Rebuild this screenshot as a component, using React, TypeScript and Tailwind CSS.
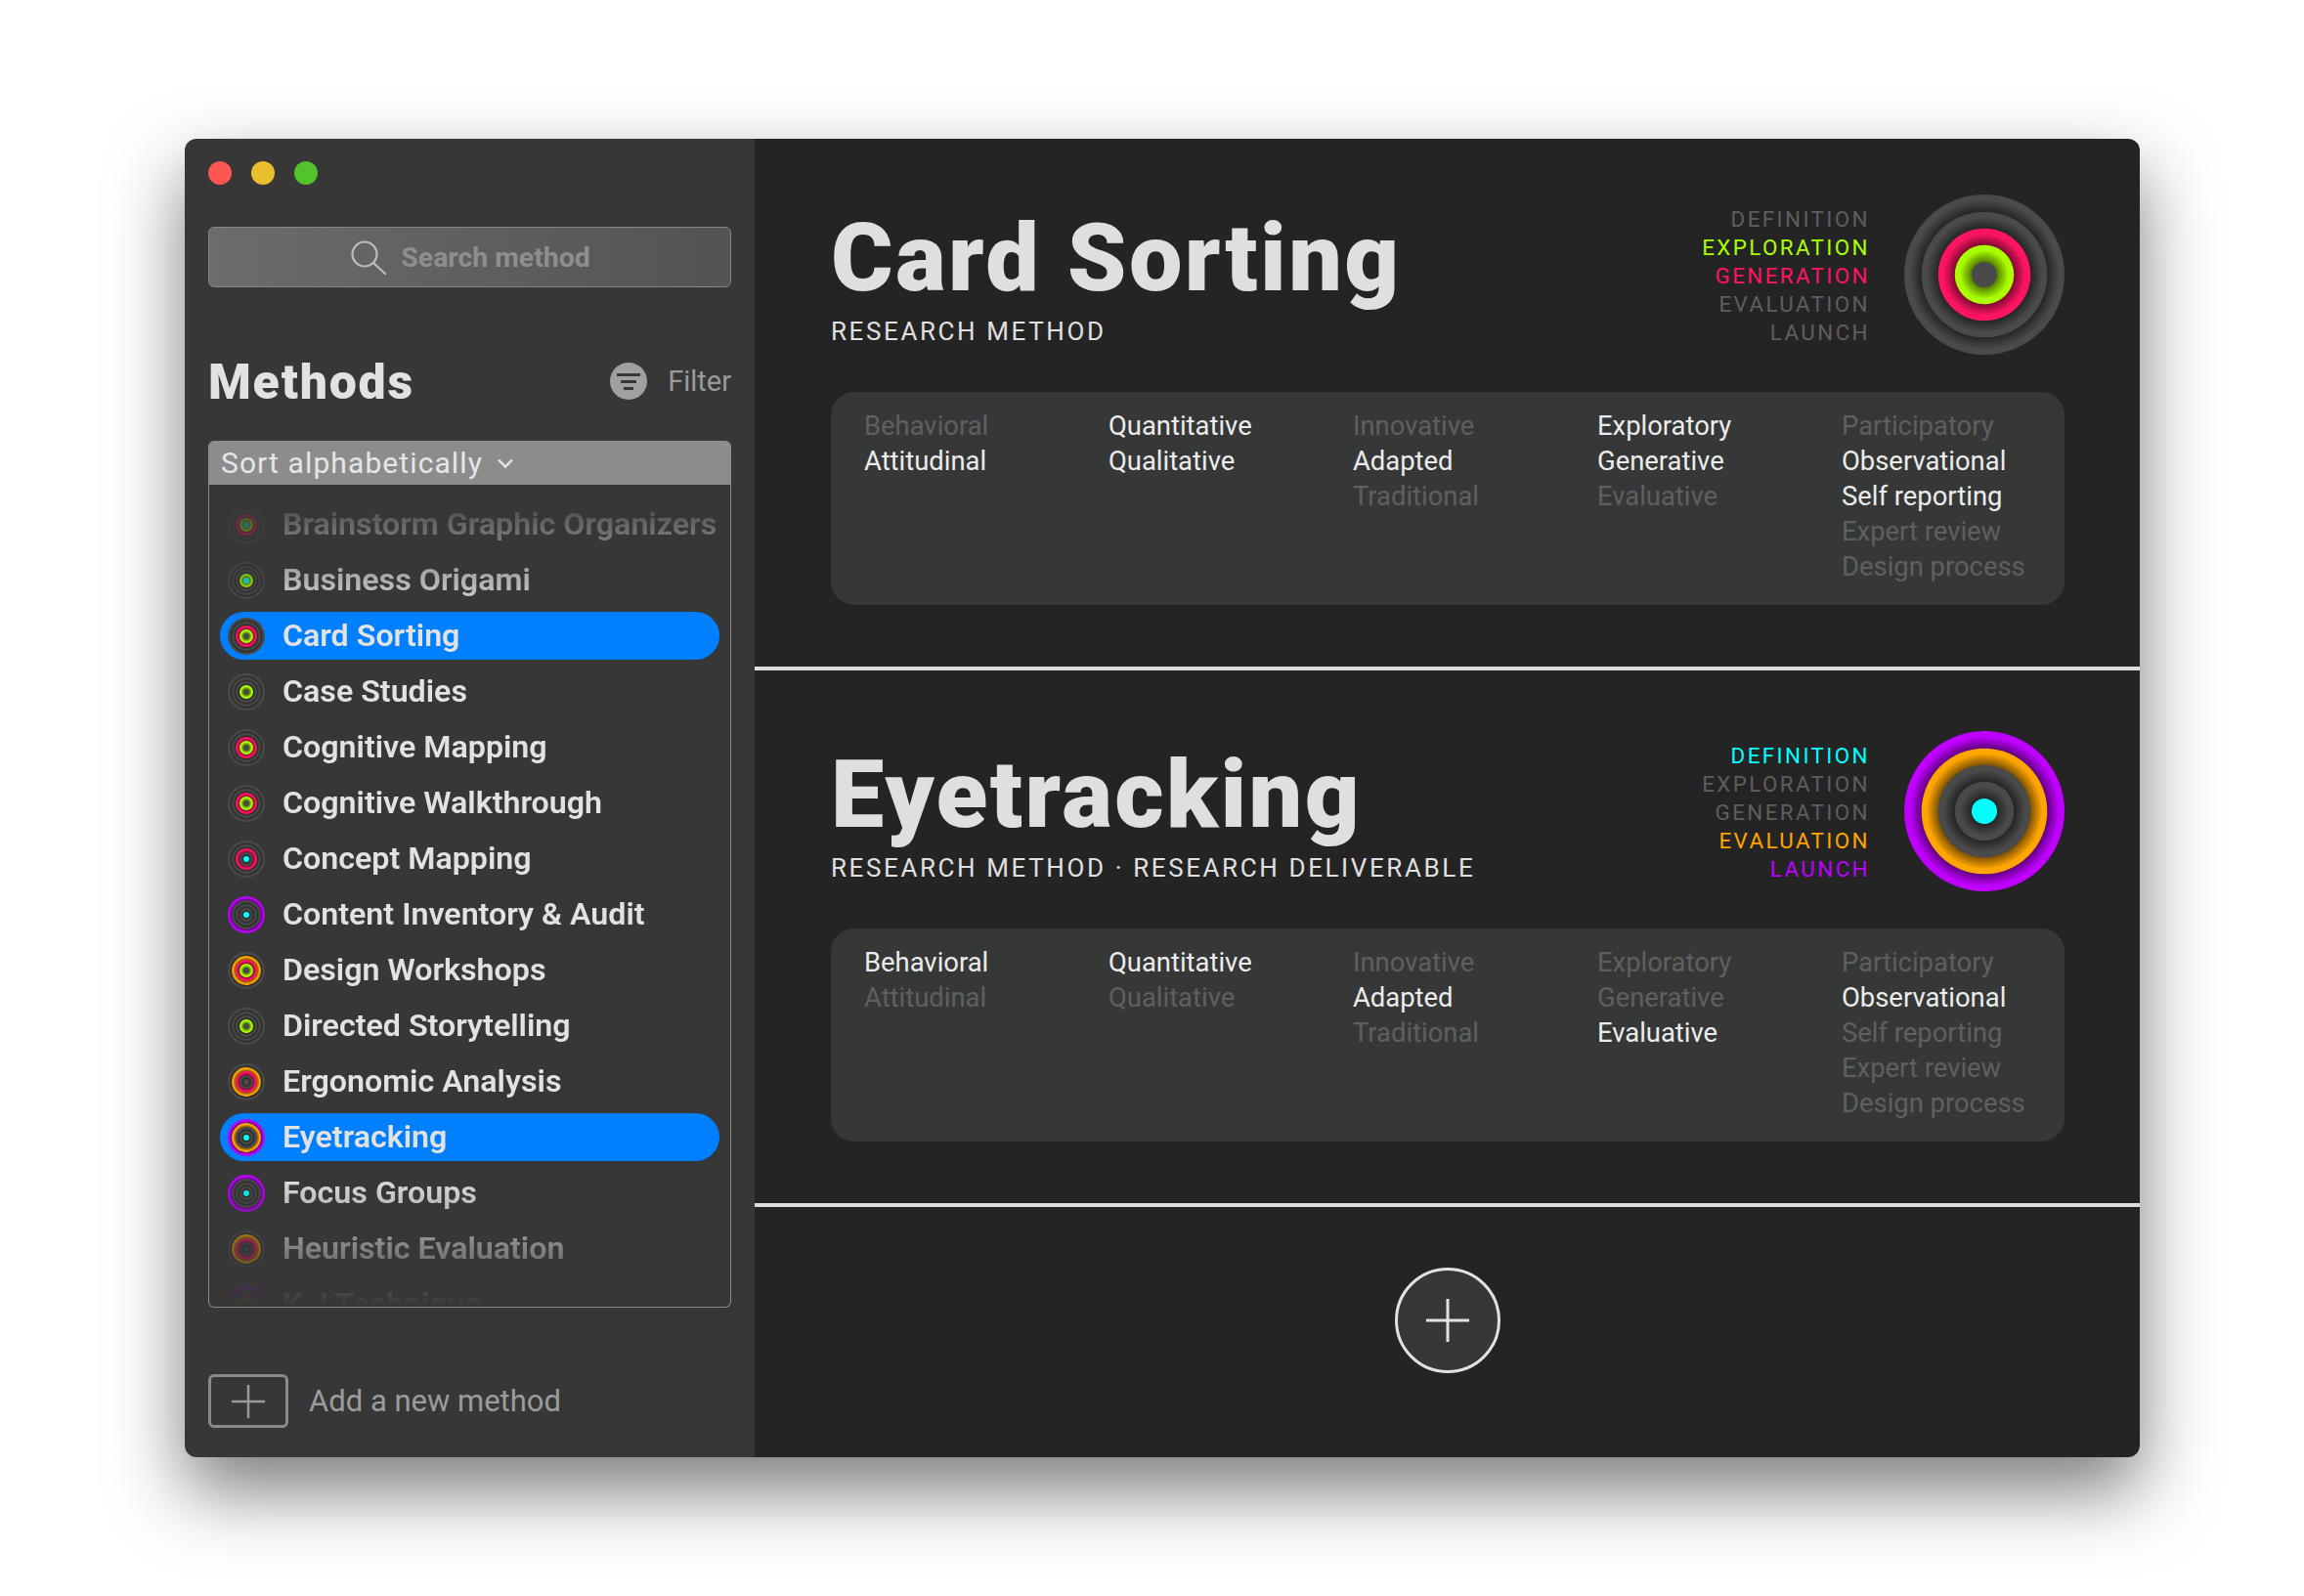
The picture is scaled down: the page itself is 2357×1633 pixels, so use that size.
import React, { useId } from "react";

const CYAN = "#00ffff";
const LIME = "#aaff00";
const PINK = "#ff1463";
const AMBER = "#ffa500";
const VIOLET = "#bf00ff";
const OFF = "#4a4a4a";

// phases, outermost ring first
const PHASES = [
  { key: "launch", label: "LAUNCH", color: VIOLET, r: 82 },
  { key: "evaluation", label: "EVALUATION", color: AMBER, r: 64.3 },
  { key: "generation", label: "GENERATION", color: PINK, r: 47.3 },
  { key: "exploration", label: "EXPLORATION", color: LIME, r: 30.3 },
  { key: "definition", label: "DEFINITION", color: CYAN, r: 13 },
];

function Rings({ on, size }: { on: string[]; size: number }) {
  const id = useId();
  return (
    <svg width={size} height={size} viewBox="0 0 164 164" className="shrink-0">
      <defs>
        {PHASES.slice(0, 4).map((p, i) => {
          const inner = PHASES[i + 1].r;
          const start = (inner / p.r) * 100;
          const end = ((inner + (p.r - inner) * 0.7) / p.r) * 100;
          return (
            <radialGradient key={p.key} id={`${id}-${p.key}`}>
              <stop offset={`${start}%`} stopColor="#000" stopOpacity={0.5} />
              <stop offset={`${end}%`} stopColor="#000" stopOpacity={0} />
            </radialGradient>
          );
        })}
      </defs>
      {PHASES.map((p, i) => (
        <React.Fragment key={p.key}>
          <circle cx="82" cy="82" r={p.r} fill={on.includes(p.key) ? p.color : OFF} />
          {i < 4 && <circle cx="82" cy="82" r={p.r} fill={`url(#${id}-${p.key})`} />}
        </React.Fragment>
      ))}
    </svg>
  );
}

const METHODS: { name: string; on: string[]; selected?: boolean }[] = [
  { name: "Brainstorm Graphic Organizers", on: ["generation", "exploration", "definition"] },
  { name: "Business Origami", on: ["exploration", "definition"] },
  { name: "Card Sorting", on: ["generation", "exploration"], selected: true },
  { name: "Case Studies", on: ["exploration"] },
  { name: "Cognitive Mapping", on: ["generation", "exploration"] },
  { name: "Cognitive Walkthrough", on: ["generation", "exploration"] },
  { name: "Concept Mapping", on: ["generation", "definition"] },
  { name: "Content Inventory & Audit", on: ["launch", "definition"] },
  { name: "Design Workshops", on: ["evaluation", "generation", "exploration"] },
  { name: "Directed Storytelling", on: ["exploration"] },
  { name: "Ergonomic Analysis", on: ["evaluation", "generation"] },
  { name: "Eyetracking", on: ["launch", "evaluation", "definition"], selected: true },
  { name: "Focus Groups", on: ["launch", "definition"] },
  { name: "Heuristic Evaluation", on: ["evaluation", "generation"] },
  { name: "K J Technique", on: ["launch", "generation", "exploration"] },
];

type Facet = { label: string; on?: boolean };

const SECTIONS: { title: string; sub: string; on: string[]; facets: Facet[][]; first?: boolean }[] = [
  {
    title: "Card Sorting",
    sub: "RESEARCH METHOD",
    on: ["generation", "exploration"],
    first: true,
    facets: [
      [{ label: "Behavioral" }, { label: "Attitudinal", on: true }],
      [{ label: "Quantitative", on: true }, { label: "Qualitative", on: true }],
      [{ label: "Innovative" }, { label: "Adapted", on: true }, { label: "Traditional" }],
      [{ label: "Exploratory", on: true }, { label: "Generative", on: true }, { label: "Evaluative" }],
      [
        { label: "Participatory" },
        { label: "Observational", on: true },
        { label: "Self reporting", on: true },
        { label: "Expert review" },
        { label: "Design process" },
      ],
    ],
  },
  {
    title: "Eyetracking",
    sub: "RESEARCH METHOD · RESEARCH DELIVERABLE",
    on: ["launch", "evaluation", "definition"],
    facets: [
      [{ label: "Behavioral", on: true }, { label: "Attitudinal" }],
      [{ label: "Quantitative", on: true }, { label: "Qualitative" }],
      [{ label: "Innovative" }, { label: "Adapted", on: true }, { label: "Traditional" }],
      [{ label: "Exploratory" }, { label: "Generative" }, { label: "Evaluative", on: true }],
      [
        { label: "Participatory" },
        { label: "Observational", on: true },
        { label: "Self reporting" },
        { label: "Expert review" },
        { label: "Design process" },
      ],
    ],
  },
];

function Sidebar() {
  return (
    <aside className="w-[583px] shrink-0 bg-[#363736] px-6 pt-[23px] flex flex-col">
      <div className="flex gap-[20px]">
        <span className="w-6 h-6 rounded-full bg-[#fc5753]" />
        <span className="w-6 h-6 rounded-full bg-[#e9c02b]" />
        <span className="w-6 h-6 rounded-full bg-[#53c32b]" />
      </div>

      <div className="mt-[43px] h-[62px] rounded-md border border-[#858686] bg-gradient-to-r from-[#6b6c6b] to-[#525352] flex items-center justify-center gap-[15px] pl-[2px]">
        <svg width="36" height="35" viewBox="0 0 36 35" fill="none" stroke="#bdbdbd" strokeWidth="2.2">
          <circle cx="14" cy="14" r="12.5" />
          <path d="M23 23 L35 34" strokeLinecap="round" />
        </svg>
        <span className="mt-[3px] text-[28.4px] font-bold text-[#8d8f8f] leading-none">Search method</span>
      </div>

      <div className="mt-[66px] h-[60px] flex items-center justify-between">
        <h2 className="mt-[2px] text-[50px] font-black tracking-[1.8px] text-[#e2e2e2] leading-none">Methods</h2>
        <div className="flex items-center gap-[21px]">
          <span className="w-[38px] h-[38px] rounded-full bg-[#a0a0a0] flex flex-col items-center justify-center gap-[4px]">
            <span className="w-6 h-[3px] bg-[#363736]" />
            <span className="w-4 h-[3px] bg-[#363736]" />
            <span className="w-[10px] h-[3px] bg-[#363736]" />
          </span>
          <span className="text-[29px] text-[#9a9a9a] leading-none">Filter</span>
        </div>
      </div>

      <div className="mt-[31px] h-[45px] rounded-t-md bg-[#8b8d8d] flex items-center pl-[13px] gap-[14px]">
        <span className="text-[30px] tracking-[1.1px] text-[#e6e6e6] leading-none">Sort alphabetically</span>
        <svg width="18" height="12" viewBox="0 0 18 12" fill="none" stroke="#e6e6e6" strokeWidth="2.4">
          <path d="M2 2.5 L9 9.5 L16 2.5" />
        </svg>
      </div>

      <div className="h-[842px] rounded-b-md border border-t-0 border-[#8a8a8a] overflow-hidden">
        <ul className="h-full px-[11px] pt-[16px] flex flex-col gap-2 overflow-hidden [mask-image:linear-gradient(to_bottom,transparent_5px,black_135px,black_calc(100%-134px),transparent_100%)]">
          {METHODS.map((m) => (
            <li
              key={m.name}
              className={`h-[49px] shrink-0 rounded-full flex items-center pl-2 gap-[18px] ${m.selected ? "bg-[#007fff]" : ""}`}
            >
              <Rings on={m.on} size={38} />
              <span className="text-[32.2px] font-semibold text-[#e2e2e2] leading-none whitespace-nowrap">{m.name}</span>
            </li>
          ))}
        </ul>
      </div>

      <div className="mt-[68px] flex items-center gap-[21px]">
        <span className="w-[82px] h-[55px] rounded-md border-[3px] border-[#8a8a8a] flex items-center justify-center">
          <svg width="34" height="34" viewBox="0 0 34 34" stroke="#9a9a9a" strokeWidth="2.5">
            <path d="M0 17 H34 M17 0 V34" />
          </svg>
        </span>
        <span className="text-[31px] text-[#9c9c9c] leading-none">Add a new method</span>
      </div>
    </aside>
  );
}

function Section({ title, sub, on, facets, first }: (typeof SECTIONS)[number]) {
  return (
    <section className={`pl-[78px] pr-[77px] border-b-4 border-[#dedede] pb-[63px] ${first ? "pt-[38px]" : "pt-[43px]"}`}>
      <div className="h-[221px] flex justify-between items-start">
        <div>
          <h1 className="mt-[29px] text-[97px] font-black tracking-[2.4px] text-[#dfdfdf] leading-[110px]">{title}</h1>
          <p className="mt-[4px] text-[26px] tracking-[2.6px] text-[#e0e0e0] leading-[32px]">{sub}</p>
        </div>
        <div className="flex items-start gap-[35px]">
          <div className="mt-[30px] flex flex-col items-end">
            {[...PHASES].reverse().map((p) => (
              <span
                key={p.key}
                className="text-[22.4px] tracking-[2.4px] leading-[29px]"
                style={{ color: on.includes(p.key) ? p.color : "#5e5e5e" }}
              >
                {p.label}
              </span>
            ))}
          </div>
          <div className="mt-[19px]">
            <Rings on={on} size={164} />
          </div>
        </div>
      </div>
      <div className="h-[218px] rounded-[24px] bg-[#363837] pl-[34px] pt-[17px] grid grid-cols-[250px_250px_250px_250px_1fr]">
        {facets.map((col, i) => (
          <div key={i} className="flex flex-col">
            {col.map((f) => (
              <span
                key={f.label}
                className={`text-[27.4px] leading-[36px] whitespace-nowrap ${f.on ? "text-[#ececec]" : "text-[#5e605f]"}`}
              >
                {f.label}
              </span>
            ))}
          </div>
        ))}
      </div>
    </section>
  );
}

export default function App() {
  return (
    <div className="min-h-[1633px] bg-white pt-[142px] pl-[189px] font-[Roboto,sans-serif]">
      <div className="w-[2000px] h-[1349px] rounded-xl overflow-hidden flex shadow-[0_34px_76px_rgba(0,0,0,0.52)]">
        <Sidebar />
        <main className="flex-1 bg-[#242424] flex flex-col">
          {SECTIONS.map((s) => (
            <Section key={s.title} {...s} />
          ))}
          <div className="flex-1 flex items-center justify-center pb-[24px]">
            <button
              type="button"
              className="w-[108px] h-[108px] rounded-full border-[3.5px] border-[#e2e2e2] bg-[#363837] flex items-center justify-center"
            >
              <svg width="44" height="44" viewBox="0 0 44 44" stroke="#e2e2e2" strokeWidth="3">
                <path d="M0 22 H44 M22 0 V44" />
              </svg>
            </button>
          </div>
        </main>
      </div>
    </div>
  );
}
